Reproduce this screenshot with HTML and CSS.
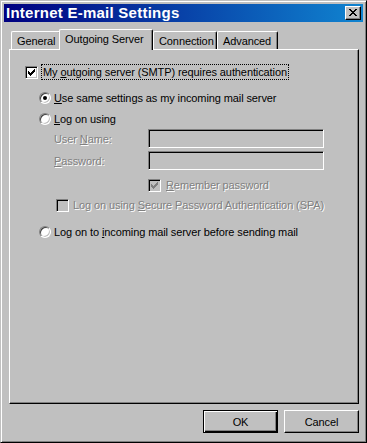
FILE: index.html
```html
<!DOCTYPE html>
<html>
<head>
<meta charset="utf-8">
<link rel="stylesheet" href="styles.css">
</head>
<body>
<div class="window">
  <div class="titlebar">
    <span class="title">Internet E-mail Settings</span>
    <div class="close">
      <svg width="8" height="7" viewBox="0 0 8 7" shape-rendering="crispEdges">
        <path d="M0 0h2v1h-2z M6 0h2v1h-2z M1 1h2v1h-2z M5 1h2v1h-2z M2 2h4v1h-4z M3 3h2v1h-2z M2 4h4v1h-4z M1 5h2v1h-2z M5 5h2v1h-2z M0 6h2v1h-2z M6 6h2v1h-2z" fill="#000"/>
      </svg>
    </div>
  </div>
  <div class="body">
    <div class="tabs">
      <div class="tab tab-general">General</div>
      <div class="tab tab-outgoing selected">Outgoing Server</div>
      <div class="tab tab-connection">Connection</div>
      <div class="tab tab-advanced">Advanced</div>
    </div>
    <div class="panel">
      <div class="row row-auth">
        <span class="check checked">
          <svg width="7" height="7" viewBox="0 0 7 7" shape-rendering="crispEdges"><path d="M6 0h1v3h-1z M5 1h1v3h-1z M4 2h1v3h-1z M3 3h1v3h-1z M2 4h1v3h-1z M1 3h1v3h-1z M0 2h1v3h-1z" fill="#000"/></svg>
        </span>
        <span class="focus-label">My <u>o</u>utgoing server (SMTP) requires authentication</span>
      </div>
      <div class="row row-radio1">
        <span class="radio on"><span class="dot"></span></span>
        <span class="rlabel"><u>U</u>se same settings as my incoming mail server</span>
      </div>
      <div class="row row-radio2">
        <span class="radio"></span>
        <span class="rlabel"><u>L</u>og on using</span>
      </div>
      <div class="row row-field row-user">
        <span class="flabel disabled">User <u>N</u>ame:</span>
        <span class="textbox"></span>
      </div>
      <div class="row row-field row-pass">
        <span class="flabel disabled"><u>P</u>assword:</span>
        <span class="textbox"></span>
      </div>
      <div class="row row-remember">
        <span class="check dis">
          <svg width="7" height="7" viewBox="0 0 7 7" shape-rendering="crispEdges"><path d="M6 0h1v3h-1z M5 1h1v3h-1z M4 2h1v3h-1z M3 3h1v3h-1z M2 4h1v3h-1z M1 3h1v3h-1z M0 2h1v3h-1z" fill="#808080"/></svg>
        </span>
        <span class="clabel disabled"><u>R</u>emember password</span>
      </div>
      <div class="row row-spa">
        <span class="check dis"></span>
        <span class="clabel disabled">Log on using <u>S</u>ecure Password Authentication (SPA)</span>
      </div>
      <div class="row row-radio3">
        <span class="radio"></span>
        <span class="rlabel">Log on to <u>i</u>ncoming mail server before sending mail</span>
      </div>
    </div>
    <div class="buttons">
      <div class="btn default"><span>OK</span></div>
      <div class="btn">Cancel</div>
    </div>
  </div>
</div>
</body>
</html>
```

FILE: styles.css
```css
* { box-sizing: border-box; }
html, body { margin: 0; padding: 0; background: #c0c0c0; }
body {
  font-family: "Liberation Sans", Arial, sans-serif;
  font-size: 11px;
  letter-spacing: -0.1px;
  color: #000;
}
u { text-decoration: underline; text-underline-offset: 1px; }

.window {
  width: 367px;
  height: 443px;
  background: #c0c0c0;
  border: 1px solid;
  border-color: #c0c0c0 #000 #000 #c0c0c0;
  box-shadow: inset 1px 1px #fff, inset -1px -1px #808080;
  padding: 3px;
  display: flex;
  flex-direction: column;
}

.titlebar {
  height: 18px;
  background: linear-gradient(to right, #000080, #1084d0);
  display: flex;
  align-items: center;
  justify-content: space-between;
  padding-left: 2px;
  padding-right: 2px;
}
.title {
  color: #fff;
  font-weight: bold;
  font-size: 15px;
  letter-spacing: 0.25px;
  line-height: 18px;
}
.close {
  width: 16px;
  height: 14px;
  background: #c0c0c0;
  border: 1px solid;
  border-color: #fff #000 #000 #fff;
  box-shadow: inset -1px -1px #808080;
  display: flex;
  align-items: center;
  justify-content: center;
  padding-bottom: 1px;
  padding-right: 1px;
}
.close svg { display: block; }

.body {
  flex: 1;
  padding: 7px 4px 0 5px;
  display: flex;
  flex-direction: column;
}

.tabs {
  display: flex;
  align-items: flex-end;
  height: 20px;
  padding-left: 2px;
  position: relative;
  z-index: 1;
}
.tab {
  height: 18px;
  border-top: 1px solid #fff;
  border-left: 1px solid #fff;
  border-right: 1px solid #000;
  border-radius: 2px 2px 0 0;
  box-shadow: inset -1px 0 #808080;
  background: #c0c0c0;
  display: flex;
  align-items: center;
  padding-left: 5px;
  line-height: 14px;
  padding-bottom: 0;
}
.tab-general { width: 50px; margin-right: -2px; }
.tab-outgoing { width: 94px; }
.tab-connection { width: 64px; }
.tab-advanced { width: 61px; }
.tab.selected {
  height: 21px;
  margin-bottom: -1px;
  position: relative;
  z-index: 2;
  padding-bottom: 3px;
}

.panel {
  height: 355px;
  border: 1px solid;
  border-color: #fff #000 #000 #fff;
  box-shadow: inset -1px -1px #808080;
  display: flex;
  flex-direction: column;
  padding-top: 14px;
}

.row {
  display: flex;
  align-items: center;
  height: 16px;
}

.check {
  width: 13px;
  height: 13px;
  flex: none;
  background: #fff;
  border: 1px solid;
  border-color: #808080 #fff #fff #808080;
  box-shadow: inset 1px 1px #000, inset -1px -1px #c0c0c0;
  display: flex;
  align-items: center;
  justify-content: center;
}
.check svg { display: block; }
.check.dis { background: #c0c0c0; }

.radio {
  width: 12px;
  height: 12px;
  flex: none;
  border-radius: 50%;
  background: #fff;
  border: 1px solid;
  border-color: #808080 #fff #fff #808080;
  box-shadow: inset 1px 1px #404040, inset -1px -1px #c0c0c0;
  display: flex;
  align-items: center;
  justify-content: center;
}
.radio .dot {
  width: 4px;
  height: 4px;
  border-radius: 50%;
  background: #000;
}

.row-auth { margin-left: 15px; }
.focus-label {
  margin-left: 3px;
  border: 1px dotted #000;
  height: 16px;
  line-height: 14px;
  padding: 0 1px;
}

.row-radio1 { margin-left: 29px; margin-top: 10px; }
.row-radio2 { margin-left: 29px; margin-top: 5px; }
.row-radio3 { margin-left: 29px; margin-top: 11px; }
.rlabel { margin-left: 3px; }

.row-field { margin-left: 44px; height: 19px; }
.row-user { margin-top: 2px; }
.row-pass { margin-top: 3px; }
.flabel { width: 94px; flex: none; }
.textbox {
  width: 176px;
  height: 19px;
  border: 1px solid;
  border-color: #808080 #fff #fff #808080;
  box-shadow: inset 1px 1px #000, inset -1px -1px #c0c0c0;
  background: #c0c0c0;
}

.disabled {
  color: #808080;
  text-shadow: 1px 1px 0 #fff;
}

.row-remember { margin-left: 138px; margin-top: 7px; }
.row-spa { margin-left: 46px; margin-top: 4px; }
.clabel { margin-left: 4px; }
.row-remember .clabel { margin-left: 5px; }

.buttons {
  display: flex;
  justify-content: flex-end;
  gap: 6px;
  margin-top: 6px;
}
.btn {
  width: 75px;
  height: 23px;
  border: 1px solid;
  border-color: #fff #000 #000 #fff;
  box-shadow: inset -1px -1px #808080;
  display: flex;
  align-items: center;
  justify-content: center;
  background: #c0c0c0;
}
.btn.default {
  border: 1px solid #000;
  box-shadow: inset 1px 1px #fff, inset -1px -1px #000, inset -2px -2px #808080;
}
```
